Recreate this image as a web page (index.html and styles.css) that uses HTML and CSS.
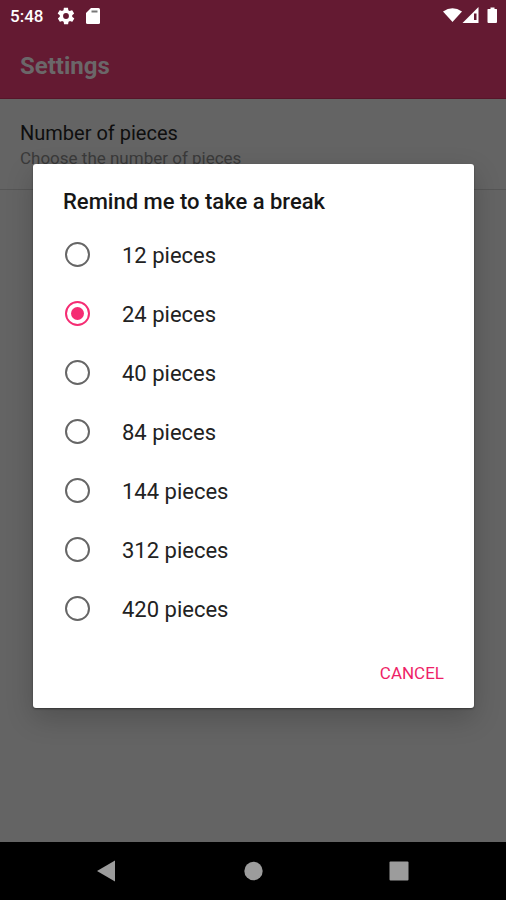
FILE: index.html
```html
<!DOCTYPE html>
<html lang="en">
<head>
<meta charset="utf-8">
<meta name="viewport" content="width=device-width, initial-scale=1">
<title>Settings</title>
<link rel="stylesheet" href="styles.css">
</head>
<body>
<div class="screen">
  <header class="top">
    <div class="status">
      <span class="time">5:48</span>
      <svg class="gear" width="20" height="20" viewBox="0 0 24 24" fill="#fff" aria-hidden="true"><path d="M19.4 13c0-.3.1-.6.1-1s0-.7-.1-1l2.100-1.600c.2-.2.3-.4.1-.7l-2-3.400c-.1-.2-.4-.3-.6-.2l-2.500 1c-.5-.4-1.100-.7-1.700-1l-.4-2.600c0-.3-.2-.5-.5-.5h-4c-.2 0-.4.2-.5.500l-.4 2.600c-.6.200-1.100.600-1.700 1l-2.500-1c-.2-.1-.5 0-.6.200l-2 3.400c-.1.200-.1.500.1.700L4.600 11c-.1.300-.1.700-.1 1s0 .7.1 1l-2.100 1.600c-.2.200-.3.400-.1.700l2 3.400c.1.200.4.300.6.200l2.500-1c.5.400 1.100.700 1.700 1l.4 2.600c0 .3.200.5.500.5h4c.2 0 .5-.2.5-.5l.4-2.600c.6-.2 1.100-.6 1.700-1l2.500 1c.2.100.5 0 .6-.2l2-3.400c.1-.2.1-.5-.1-.7zM12 15.500a3.500 3.500 0 1 1 0-7 3.500 3.500 0 0 1 0 7z"/></svg>
      <svg class="card" width="14" height="16" viewBox="0 0 14 16" aria-hidden="true"><path fill="#fff" d="M5 0h7.500Q14 0 14 1.500v13q0 1.500-1.500 1.500h-11Q0 16 0 14.500V5z"/><path d="M5.500 2.500h6v2h-6z" fill="#777"/></svg>
      <svg class="signals" width="56" height="18" viewBox="0 0 56 18" aria-hidden="true">
        <path fill="#fff" d="M1 4.500Q10.500-2 20 4.500L10.500 15z"/>
        <path fill="#fff" d="M36.500 0v16H20.500z"/>
        <path fill="#641a32" d="M32 6.500h2.500V13H32z"/>
        <path fill="#fff" d="M46 2h2.500V.5h4V2h2q.5 0 .5.500v12.500q0 1-1 1h-7.500q-1 0-1-1V2.500q0-.5.500-.5z"/>
      </svg>
    </div>
    <h1 class="app-title">Settings</h1>
  </header>
  <main class="content">
    <section class="preference">
      <h2 class="pref-title">Number of pieces</h2>
      <p class="pref-summary">Choose the number of pieces</p>
    </section>
  </main>
  <nav class="navbar">
    <button class="nav-button" aria-label="Back"><svg width="20" height="22" viewBox="0 0 20 22"><path d="M0 11L18 .5v21z"/></svg></button>
    <button class="nav-button" aria-label="Home"><svg width="20" height="22" viewBox="0 0 20 22"><circle cx="10.500" cy="11" r="9.200"/></svg></button>
    <button class="nav-button" aria-label="Recent apps"><svg width="20" height="22" viewBox="0 0 20 22"><rect x=".5" y="1.500" width="19" height="19" rx="1"/></svg></button>
  </nav>
  <div class="overlay">
    <form class="dialog" role="dialog" aria-labelledby="dialog-title">
      <h2 class="dialog-title" id="dialog-title">Remind me to take a break</h2>
      <label class="option"><input type="radio" name="pieces"><span class="option-text">12 pieces</span></label>
      <label class="option"><input type="radio" name="pieces" checked><span class="option-text">24 pieces</span></label>
      <label class="option"><input type="radio" name="pieces"><span class="option-text">40 pieces</span></label>
      <label class="option"><input type="radio" name="pieces"><span class="option-text">84 pieces</span></label>
      <label class="option"><input type="radio" name="pieces"><span class="option-text">144 pieces</span></label>
      <label class="option"><input type="radio" name="pieces"><span class="option-text">312 pieces</span></label>
      <label class="option"><input type="radio" name="pieces"><span class="option-text">420 pieces</span></label>
      <div class="actions"><button class="cancel" type="button">CANCEL</button></div>
    </form>
  </div>
</div>
</body>
</html>
```
FILE: styles.css
```css
* {
  box-sizing: border-box;
}

body {
  margin: 0;
  font-family: Roboto, "Liberation Sans", sans-serif;
}

h1, h2, p {
  margin: 0;
}

.screen {
  position: relative;
  display: flex;
  flex-direction: column;
  min-height: 100vh;
  background: #646464;
}

.top {
  background: #641a32;
  border-bottom: 1px solid #571529;
}

.status {
  display: flex;
  align-items: center;
  height: 32px;
  padding: 0 8px 0 10px;
  color: #fff;
}

.time {
  font-size: 17px;
  font-weight: 500;
}

.gear {
  margin-left: 13px;
}

.card {
  margin-left: 10px;
}

.signals {
  margin-left: auto;
}

.app-title {
  padding: 18px 20px 16px;
  font-size: 24px;
  line-height: 32px;
  font-weight: 700;
  color: #6b6769;
}

.content {
  flex: 1;
}

.preference {
  padding: 20px 20px 20px;
  border-bottom: 1px solid #565656;
}

.pref-title {
  font-size: 20px;
  line-height: 28px;
  font-weight: 400;
  color: #0e0e0e;
}

.pref-summary {
  font-size: 17px;
  line-height: 22px;
  color: #3a3a3a;
}

.navbar {
  display: flex;
  justify-content: center;
  gap: 98px;
  height: 58px;
  background: #000;
}

.nav-button {
  display: flex;
  align-items: center;
  justify-content: center;
  width: 48px;
  padding: 0;
  border: 0;
  background: none;
}

.nav-button svg {
  fill: #9c9c9c;
}

.overlay {
  position: absolute;
  inset: 30px 0 58px;
  display: flex;
  align-items: center;
  padding: 0 32px 0 33px;
}

.dialog {
  flex: 1;
  border-radius: 3px;
  background: #fff;
  box-shadow: 0 1px 2px rgba(0, 0, 0, .4), 0 10px 28px rgba(0, 0, 0, .2);
}

.dialog-title {
  padding: 22px 30px 7px;
  font-size: 22px;
  line-height: 32px;
  font-weight: 500;
  color: #161616;
}

.option {
  display: flex;
  align-items: center;
  gap: 32px;
  height: 59px;
  padding-left: 32px;
  font-size: 22px;
  color: #222;
}

.option-text {
  padding-top: 2px;
}

.option input {
  appearance: none;
  display: grid;
  place-items: center;
  width: 25px;
  height: 25px;
  margin: 0;
  border: 2px solid #666;
  border-radius: 50%;
}

.option input:checked {
  border-color: #f52c73;
}

.option input:checked::before {
  content: "";
  width: 13px;
  height: 13px;
  border-radius: 50%;
  background: #f52c73;
}

.actions {
  display: flex;
  align-items: center;
  justify-content: flex-end;
  height: 70px;
  padding-right: 30px;
}

.cancel {
  padding: 8px 0;
  border: 0;
  background: none;
  font: 400 17px/20px Roboto, "Liberation Sans", sans-serif;
  color: #ee1f67;
}
```
